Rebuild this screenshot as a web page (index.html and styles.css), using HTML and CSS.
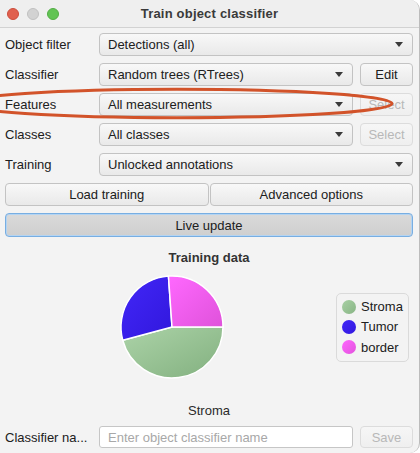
FILE: index.html
```html
<!DOCTYPE html>
<html>
<head>
<meta charset="utf-8">
<link rel="stylesheet" href="styles.css">
</head>
<body>
<div class="window">
  <div class="titlebar">
    <div class="lights">
      <span class="light red"></span><span class="light grey"></span><span class="light green"></span>
    </div>
    <div class="title">Train object classifier</div>
    <div></div>
  </div>
  <div class="content">
    <div class="form">
      <span class="label">Object filter</span>
      <div class="combo span2"><span>Detections (all)</span><i class="arrow"></i></div>

      <span class="label">Classifier</span>
      <div class="combo"><span>Random trees (RTrees)</span><i class="arrow"></i></div>
      <button class="btn">Edit</button>

      <span class="label">Features</span>
      <div class="combo"><span>All measurements</span><i class="arrow"></i></div>
      <button class="btn disabled">Select</button>

      <span class="label">Classes</span>
      <div class="combo"><span>All classes</span><i class="arrow"></i></div>
      <button class="btn disabled">Select</button>

      <span class="label">Training</span>
      <div class="combo span2"><span>Unlocked annotations</span><i class="arrow"></i></div>
    </div>

    <div class="btnrow">
      <button class="btn">Load training</button>
      <button class="btn">Advanced options</button>
    </div>

    <button class="btn toggle">Live update</button>

    <div class="chart-title">Training data</div>
    <div class="chart-body">
      <svg class="pie" width="331" height="106" viewBox="0 0 331 106">
        <defs>
          <linearGradient id="gGreen" x1="0" y1="0" x2="1" y2="1">
            <stop offset="0" stop-color="#acd3a8"/>
            <stop offset="1" stop-color="#82b07f"/>
          </linearGradient>
          <linearGradient id="gBlue" x1="0" y1="0" x2="1" y2="1">
            <stop offset="0" stop-color="#4227f8"/>
            <stop offset="1" stop-color="#3117dc"/>
          </linearGradient>
          <linearGradient id="gPink" x1="0" y1="0" x2="1" y2="1">
            <stop offset="0" stop-color="#ff68ff"/>
            <stop offset="1" stop-color="#df52da"/>
          </linearGradient>
        </defs>
        <path d="M167,53 L218,53 A51,51 0 0 1 117.74,66.2 Z" fill="url(#gGreen)" stroke="#ffffff" stroke-width="1.5" stroke-linejoin="round"/>
        <path d="M167,53 L117.74,66.2 A51,51 0 0 1 163.44,2.12 Z" fill="url(#gBlue)" stroke="#ffffff" stroke-width="1.5" stroke-linejoin="round"/>
        <path d="M167,53 L163.44,2.12 A51,51 0 0 1 218,53 Z" fill="url(#gPink)" stroke="#ffffff" stroke-width="1.5" stroke-linejoin="round"/>
      </svg>
      <div class="legend">
        <div class="item"><span class="dot dot-green"></span>Stroma</div>
        <div class="item"><span class="dot dot-blue"></span>Tumor</div>
        <div class="item"><span class="dot dot-pink"></span>border</div>
      </div>
    </div>
    <div class="caption">Stroma</div>

    <div class="form bottom">
      <span class="label">Classifier na...</span>
      <input class="field" type="text" placeholder="Enter object classifier name">
      <button class="btn disabled">Save</button>
    </div>
  </div>

  <svg class="annotation" width="420" height="453" viewBox="0 0 420 453">
    <ellipse cx="177" cy="103.5" rx="215" ry="14.3" fill="none" stroke="#d2532a" stroke-width="3"/>
  </svg>
</div>
</body>
</html>
```

FILE: styles.css
```css
html, body {
  margin: 0;
  padding: 0;
  background: #ffffff;
}

body {
  font-family: "Liberation Sans", Arial, sans-serif;
  font-size: 13px;
  color: #202020;
}

.window {
  position: relative;
  box-sizing: border-box;
  width: 420px;
  height: 453px;
  background: #f3f3f3;
  border-right: 1px solid #bcbcbc;
  border-radius: 0 10px 10px 0;
  overflow: hidden;
  display: flex;
  flex-direction: column;
}

.titlebar {
  height: 27px;
  flex: none;
  background: #efefef;
  border-bottom: 1px solid #d2d2d2;
  display: grid;
  grid-template-columns: 1fr auto 1fr;
  align-items: center;
}

.lights {
  display: flex;
  gap: 8px;
  padding-left: 7px;
}

.light {
  width: 12px;
  height: 12px;
  border-radius: 50%;
  box-sizing: border-box;
}

.light.red { background: #e0604e; border: 1px solid #cc4d3c; }
.light.grey { background: #d2d2d2; border: 1px solid #c0c0c0; }
.light.green { background: #62c454; border: 1px solid #53ad45; }

.title {
  font-weight: bold;
  font-size: 13px;
  color: #3a3a3a;
  letter-spacing: 0.2px;
}

.content {
  flex: 1;
  display: flex;
  flex-direction: column;
  padding: 5px 6px 5px 5px;
}

.form {
  display: grid;
  grid-template-columns: 87px 1fr 53px;
  column-gap: 7px;
  row-gap: 7px;
  grid-auto-rows: 23px;
  align-items: center;
}

.label {
  white-space: nowrap;
  color: #202020;
}

.combo {
  height: 23px;
  box-sizing: border-box;
  border: 1px solid #c3c3c3;
  border-radius: 4px;
  background: linear-gradient(#f8f8f8, #e9e9e9);
  display: flex;
  align-items: center;
  justify-content: space-between;
  padding: 0 9px 0 8px;
  color: #202020;
}

.span2 {
  grid-column: 2 / 4;
}

.arrow {
  width: 0;
  height: 0;
  border-left: 4px solid transparent;
  border-right: 4px solid transparent;
  border-top: 5px solid #3a3a3a;
}

.btn {
  height: 23px;
  box-sizing: border-box;
  border: 1px solid #c3c3c3;
  border-radius: 4px;
  background: linear-gradient(#f8f8f8, #e9e9e9);
  font-family: inherit;
  font-size: 13px;
  color: #202020;
  padding: 0;
  margin: 0;
}

.btn.disabled {
  color: #b8b8b8;
  border-color: #dcdcdc;
  background: linear-gradient(#f6f6f6, #efefef);
}

.btnrow {
  margin-top: 7px;
  display: grid;
  grid-template-columns: 1fr 1fr;
  column-gap: 1px;
}

.toggle {
  margin-top: 7px;
  height: 24px;
  border: 1px solid #78aee2;
  box-shadow: inset 0 0 0 1px #b4d4f2;
  background: linear-gradient(#dadada, #cfcfcf);
}

.chart-title {
  margin-top: 13px;
  line-height: 16px;
  text-align: center;
  font-weight: bold;
  font-size: 13px;
  color: #333333;
}

.chart-body {
  margin-top: 8px;
  display: flex;
  align-items: center;
  height: 106px;
}

.pie {
  display: block;
  flex: none;
}

.legend {
  box-sizing: border-box;
  width: 73px;
  height: 69px;
  border: 1px solid #dadada;
  border-radius: 5px;
  padding: 3px 0 3px 5px;
  display: flex;
  flex-direction: column;
}

.item {
  height: 21px;
  display: flex;
  align-items: center;
  gap: 5px;
  color: #202020;
}

.dot {
  width: 14px;
  height: 14px;
  border-radius: 50%;
  flex: none;
}

.dot-green { background: linear-gradient(135deg, #a8d0a4, #88b585); }
.dot-blue { background: linear-gradient(135deg, #4127f8, #3218de); }
.dot-pink { background: linear-gradient(135deg, #ff66ff, #e252dc); }

.caption {
  margin-top: 23px;
  line-height: 16px;
  text-align: center;
  color: #2a2a2a;
}

.form.bottom {
  margin-top: 7px;
  grid-auto-rows: 22px;
}

.field {
  height: 22px;
  box-sizing: border-box;
  border: 1px solid #c6c6c6;
  border-radius: 3px;
  background: #ffffff;
  font-family: inherit;
  font-size: 13px;
  padding: 0 8px;
  margin: 0;
  width: 100%;
  color: #202020;
  outline: none;
}

.field::placeholder {
  color: #a8a8a8;
}

.form.bottom .btn {
  height: 22px;
}

.annotation {
  position: absolute;
  left: 0;
  top: 0;
  pointer-events: none;
}
```
